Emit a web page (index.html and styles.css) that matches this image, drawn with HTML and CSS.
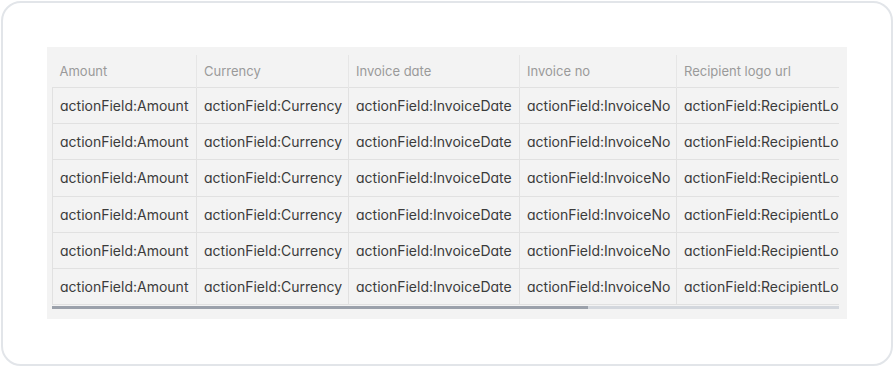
FILE: index.html
```html
<!DOCTYPE html>
<html lang="en">
<head>
    <meta charset="UTF-8">
    <meta name="viewport" content="width=device-width, initial-scale=1.0">
    <title>Invoice fields</title>
    <link rel="stylesheet" href="styles.css">
</head>
<body>
    <div class="card">
        <div class="panel">
            <div class="table-scroll">
                <table class="data-table">
                    <colgroup>
                        <col class="c-amount">
                        <col class="c-currency">
                        <col class="c-date">
                        <col class="c-no">
                        <col class="c-logo">
                    </colgroup>
                    <thead>
                        <tr>
                            <th>Amount</th>
                            <th>Currency</th>
                            <th>Invoice date</th>
                            <th>Invoice no</th>
                            <th>Recipient logo url</th>
                        </tr>
                    </thead>
                    <tbody>
                        <tr><td>actionField:Amount</td><td>actionField:Currency</td><td>actionField:InvoiceDate</td><td>actionField:InvoiceNo</td><td>actionField:RecipientLogoUrl</td></tr>
                        <tr><td>actionField:Amount</td><td>actionField:Currency</td><td>actionField:InvoiceDate</td><td>actionField:InvoiceNo</td><td>actionField:RecipientLogoUrl</td></tr>
                        <tr><td>actionField:Amount</td><td>actionField:Currency</td><td>actionField:InvoiceDate</td><td>actionField:InvoiceNo</td><td>actionField:RecipientLogoUrl</td></tr>
                        <tr><td>actionField:Amount</td><td>actionField:Currency</td><td>actionField:InvoiceDate</td><td>actionField:InvoiceNo</td><td>actionField:RecipientLogoUrl</td></tr>
                        <tr><td>actionField:Amount</td><td>actionField:Currency</td><td>actionField:InvoiceDate</td><td>actionField:InvoiceNo</td><td>actionField:RecipientLogoUrl</td></tr>
                        <tr><td>actionField:Amount</td><td>actionField:Currency</td><td>actionField:InvoiceDate</td><td>actionField:InvoiceNo</td><td>actionField:RecipientLogoUrl</td></tr>
                    </tbody>
                </table>
            </div>
            <div class="scrollbar"><div class="scrollbar-thumb"></div></div>
        </div>
    </div>
</body>
</html>
```

FILE: styles.css
```css
body {
    margin: 0;
    padding: 0;
    background-color: #fff;
    font-family: 'Inter', 'Noto Sans', sans-serif;
    font-feature-settings: 'cv11' 1;
}
.card {
    box-sizing: border-box;
    width: 892px;
    height: 365px;
    margin: 1px;
    border: 2px solid #e2e5e9;
    border-radius: 20px;
    padding: 44px 44px 0 44px;
}
.panel {
    width: 800px;
    height: 272px;
    background-color: #f3f3f3;
    padding: 8px 7px 0 5px;
    box-sizing: border-box;
}
.table-scroll {
    width: 787px;
    overflow: hidden;
}
.data-table {
    border-collapse: collapse;
    table-layout: fixed;
    width: 960px;
}
.c-amount { width: 144px; }
.c-currency { width: 152px; }
.c-date { width: 171px; }
.c-no { width: 157px; }
.c-logo { width: 336px; }
.data-table th {
    height: 32px;
    padding: 0 7px;
    text-align: left;
    font-weight: 400;
    font-size: 13px;
    color: #9a9a9a;
    border-left: 1px solid #e6e6e6;
    white-space: nowrap;
}
.data-table th:first-child {
    border-left: none;
}
.data-table td {
    height: 35.2px;
    padding: 0 7px;
    font-size: 14px;
    color: #3b3b3b;
    border: 1px solid #e1e1e1;
    white-space: nowrap;
    overflow: hidden;
}
.scrollbar {
    width: 787px;
    height: 3px;
    background-color: #d3d7dd;
    margin-top: 1px;
}
.scrollbar-thumb {
    width: 536px;
    height: 3px;
    background-color: #9ba1ab;
}
```
